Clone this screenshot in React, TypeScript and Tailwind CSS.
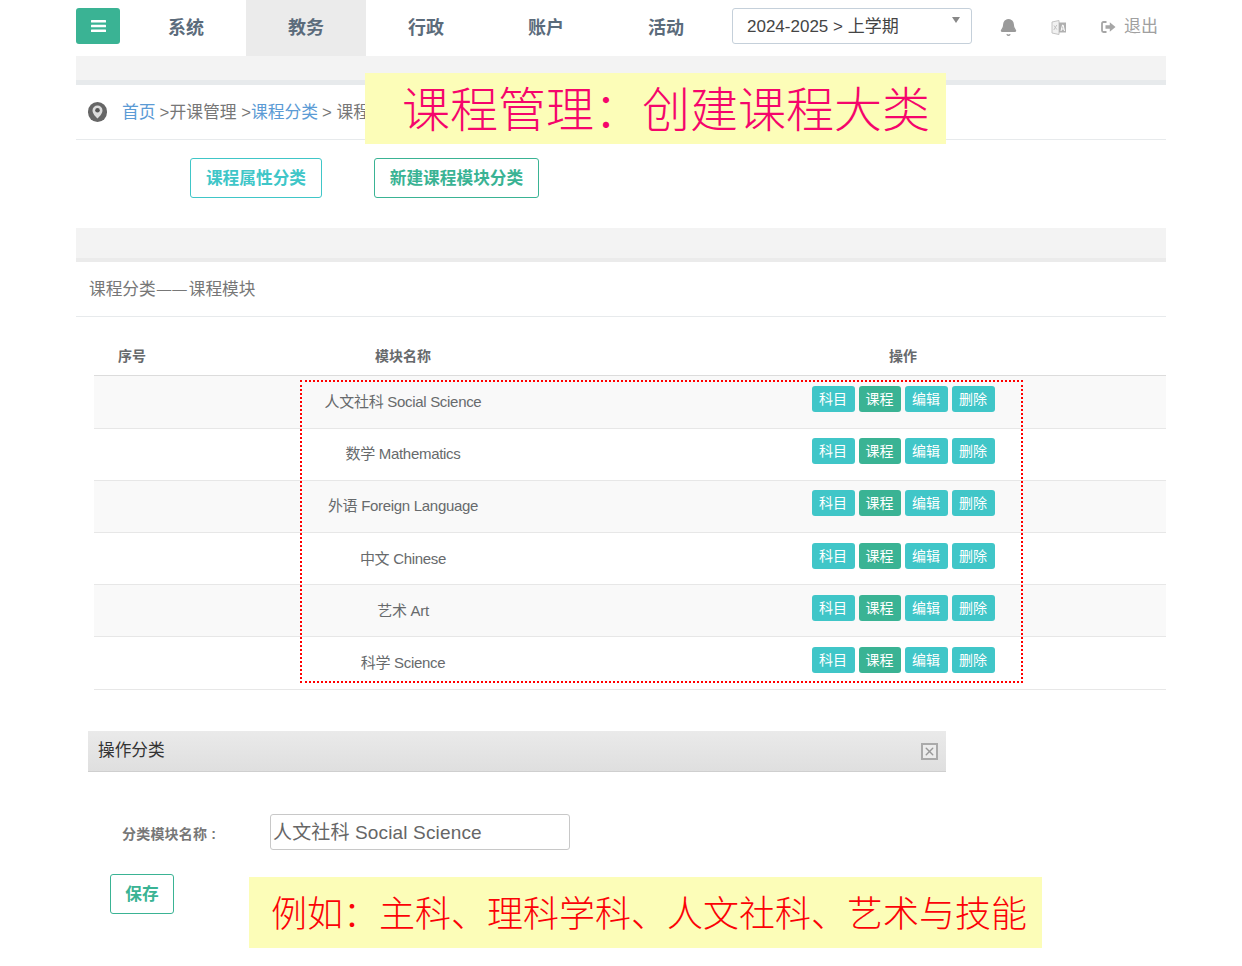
import { Bell, X } from "lucide-react";

const font = "font-['Liberation_Sans','Noto_Sans_CJK_SC',sans-serif]";
const navItems = ["系统", "教务", "行政", "账户", "活动"];
const rows = [
  { name: "人文社科 Social Science", h: "h-[53px]", text: "pt-[16px]", btn: "pt-[10px]" },
  { name: "数学 Mathematics", h: "h-[52px]", text: "pt-[15px]", btn: "pt-[9px]" },
  { name: "外语 Foreign Language", h: "h-[52px]", text: "pt-[15px]", btn: "pt-[9px]" },
  { name: "中文 Chinese", h: "h-[52px]", text: "pt-[16px]", btn: "pt-[10px]" },
  { name: "艺术 Art", h: "h-[52px]", text: "pt-[16px]", btn: "pt-[10px]" },
  { name: "科学 Science", h: "h-[53px]", text: "pt-[16px]", btn: "pt-[10px]" },
];

function RowButton({ label, green }: { label: string; green?: boolean }) {
  return (
    <span
      className={
        green
          ? "w-[42px] h-[26px] rounded-[3px] bg-[#3ab394] text-white text-sm flex items-center justify-center pb-px"
          : "w-[43px] h-[26px] rounded-[3px] bg-[#40c6c8] text-white text-sm flex items-center justify-center pb-px"
      }
    >
      {label}
    </span>
  );
}

export default function App() {
  return (
    <div className={`${font} relative w-[1242px] h-[966px] bg-white overflow-hidden text-[#676a6c]`}>
      <div className="w-[1090px] ml-[76px]">
        {/* top nav */}
        <div className="flex h-14">
          <div className="pt-2">
            <button className="w-11 h-9 rounded-[3px] bg-[#3ab394] flex items-center justify-center">
              <svg width="15" height="14" viewBox="0 0 15 14" fill="#fff">
                <rect y="1" width="15" height="2.4" rx="0.5" />
                <rect y="5.8" width="15" height="2.4" rx="0.5" />
                <rect y="10.6" width="15" height="2.4" rx="0.5" />
              </svg>
            </button>
          </div>
          <div className="flex ml-1.5">
            {navItems.map((item) => (
              <div
                key={item}
                className={
                  item === "教务"
                    ? "w-[120px] h-14 bg-[#ebebeb] flex items-center justify-center font-bold text-[18px] text-[#5b6b7b]"
                    : "w-[120px] h-14 flex items-center justify-center font-bold text-[18px] text-[#5b6b7b]"
                }
              >
                {item}
              </div>
            ))}
          </div>
          <div className="ml-1.5 mt-2 w-[240px] h-9 border border-[#c5d0da] rounded-[3px] flex items-center justify-between pl-[14px] pr-[11px] text-[#444] text-[17px]">
            <span className="pt-0.5">2024-2025 &gt; 上学期</span>
            <span className="mb-3 w-0 h-0 border-x-[4px] border-x-transparent border-t-[6px] border-t-[#888]" />
          </div>
          <div className="flex items-center text-[#a0a0a0] pb-0.5">
            <Bell size={19} fill="#9a9a9a" strokeWidth={1.5} className="ml-[27px] text-[#9a9a9a]" />
            <svg width="16" height="17" viewBox="0 0 16 17" className="ml-[33px]">
              <path d="M1 3l7 -1.5v14L1 14z" fill="#f1f1f1" stroke="#c4c4c4" />
              <path d="M8 3.5h7v10H8z" fill="#b0b0b0" />
              <path d="M10 12l1.5-6h.6L13.500 12M10.800 10h2.200" fill="none" stroke="#fff" strokeWidth="1" />
              <path d="M2.800 11l3-5M3 6.500l2.800 4" fill="none" stroke="#bdbdbd" strokeWidth="0.9" />
            </svg>
            <svg width="15" height="12" viewBox="0 0 15 12" className="ml-[34px]">
              <path d="M5.500 1H2.500A1.500 1.500 0 0 0 1 2.500v7A1.500 1.500 0 0 0 2.500 11h3" fill="none" stroke="#a6a6a6" strokeWidth="1.800" />
              <path d="M4.500 4.200h4.300V1.200L14.500 6l-5.700 4.800V7.800H4.500z" fill="#a6a6a6" />
            </svg>
            <span className="ml-[8px] text-[17px]">退出</span>
          </div>
        </div>

        {/* grey band */}
        <div className="h-[29px] bg-[#f3f3f3] border-b-[5px] border-[#e7eaec]" />

        {/* breadcrumb */}
        <div className="h-[55px] border-b border-[#e7eaec] flex items-center pl-3 text-[16.8px] text-[#777]">
          <span className="w-[19px] h-5 rounded-full bg-[#666] flex items-center justify-center">
            <svg width="11" height="14" viewBox="0 0 11 14">
              <path d="M5.500 0.500a5 5 0 0 1 5 5c0 3-3 6-5 8-2-2-5-5-5-8a5 5 0 0 1 5-5z" fill="#dcdcdc" />
              <circle cx="5.500" cy="5.300" r="2.300" fill="#555" />
            </svg>
          </span>
          <span className="ml-[15px] pt-px text-[#5b9bd5]">首页</span>
          <span className="ml-1 pt-px">&gt;开课管理 &gt;</span>
          <span className="pt-px text-[#5b9bd5]">课程分类</span>
          <span className="ml-1 pt-px">&gt; 课程</span>
        </div>

        {/* action buttons */}
        <div className="flex mt-[18px] ml-[114px] gap-[52px]">
          <button className="w-[132px] h-10 pt-0.5 border border-[#40c6c8] rounded-[3px] text-[#40c6c8] font-bold text-[16.7px]">
            课程属性分类
          </button>
          <button className="w-[165px] h-10 pt-0.5 border border-[#3ab394] rounded-[3px] text-[#3ab394] font-bold text-[16.7px]">
            新建课程模块分类
          </button>
        </div>

        {/* section title */}
        <div className="mt-[30px] h-[34px] bg-[#f3f3f3] border-b-4 border-[#ebebeb]" />
        <div className="h-[55px] pt-px border-b border-[#e7eaec] flex items-center pl-[13px] text-[16.7px] text-[#777]">
          课程分类<span className="text-[14.5px] tracking-[1px] mx-px">——</span>课程模块
        </div>

        {/* table */}
        <div className="ml-[18px] mt-5">
          <div className="grid grid-cols-[72px_474px_526px] h-[39px] border-b border-[#dcdcdc] items-center text-sm font-bold text-[#676a6c]">
            <div className="pl-6">序号</div>
            <div className="text-center">模块名称</div>
            <div className="text-center">操作</div>
          </div>
          {rows.map((row, i) => (
            <div
              key={row.name}
              className={
                i % 2 === 0
                  ? `grid grid-cols-[72px_474px_526px] ${row.h} bg-[#f9f9f9] border-b border-[#e7e7e7]`
                  : `grid grid-cols-[72px_474px_526px] ${row.h} border-b border-[#e7e7e7]`
              }
            >
              <div />
              <div className={`text-center ${row.text} leading-5 text-[15px] tracking-[-0.3px]`}>{row.name}</div>
              <div className={`flex justify-center gap-1 ${row.btn}`}>
                <RowButton label="科目" />
                <RowButton label="课程" green />
                <RowButton label="编辑" />
                <RowButton label="删除" />
              </div>
            </div>
          ))}
        </div>

        {/* dialog */}
        <div className="ml-3 mt-[41px] w-[858px] h-[41px] bg-gradient-to-b from-[#eaeaea] to-[#dfdfdf] border-b border-[#cfcfcf] flex items-center justify-between pl-[10px] pr-2 text-[16.7px] text-[#333]">
          <span>操作分类</span>
          <span className="w-[17px] h-[17px] border-2 border-[#aaa] bg-[#ececec] flex items-center justify-center text-[#999]">
            <X size={13} strokeWidth={2.5} />
          </span>
        </div>
        <div className="flex items-center mt-[42px] ml-[46px]">
          <span className="w-[148px] text-sm font-bold text-[#777] pt-1 tracking-[0.2px]">分类模块名称 :</span>
          <input
            readOnly
            value="人文社科 Social Science"
            className="w-[300px] h-9 border border-[#c8c8c8] rounded-[3px] pl-[2px] pb-1 text-[19px] text-[#666] tracking-[0.15px] outline-none"
          />
        </div>
        <button className="block ml-[34px] mt-6 w-16 h-10 pt-0.5 border border-[#3ab394] rounded-[3px] text-[#3ab394] font-bold text-[16.7px]">
          保存
        </button>
      </div>

      {/* annotations over the page */}
      <div className="absolute left-[365px] top-[73px] w-[581px] h-[71px] bg-[#fcfdb8] flex items-center pt-1 pl-[37px] text-[#f5056b] text-[48px] font-light leading-none whitespace-nowrap">
        课程管理：创建课程大类
      </div>
      <div className="absolute left-[300px] top-[380px] w-[723px] h-[303px] border-2 border-dotted border-[#ff0000]" />
      <div className="absolute left-[249px] top-[877px] w-[793px] h-[71px] bg-[#fcfdb8] flex items-center pt-1 pl-[22px] text-[#fb0207] text-[36px] font-light leading-none whitespace-nowrap">
        例如：主科、理科学科、人文社科、艺术与技能
      </div>
    </div>
  );
}
